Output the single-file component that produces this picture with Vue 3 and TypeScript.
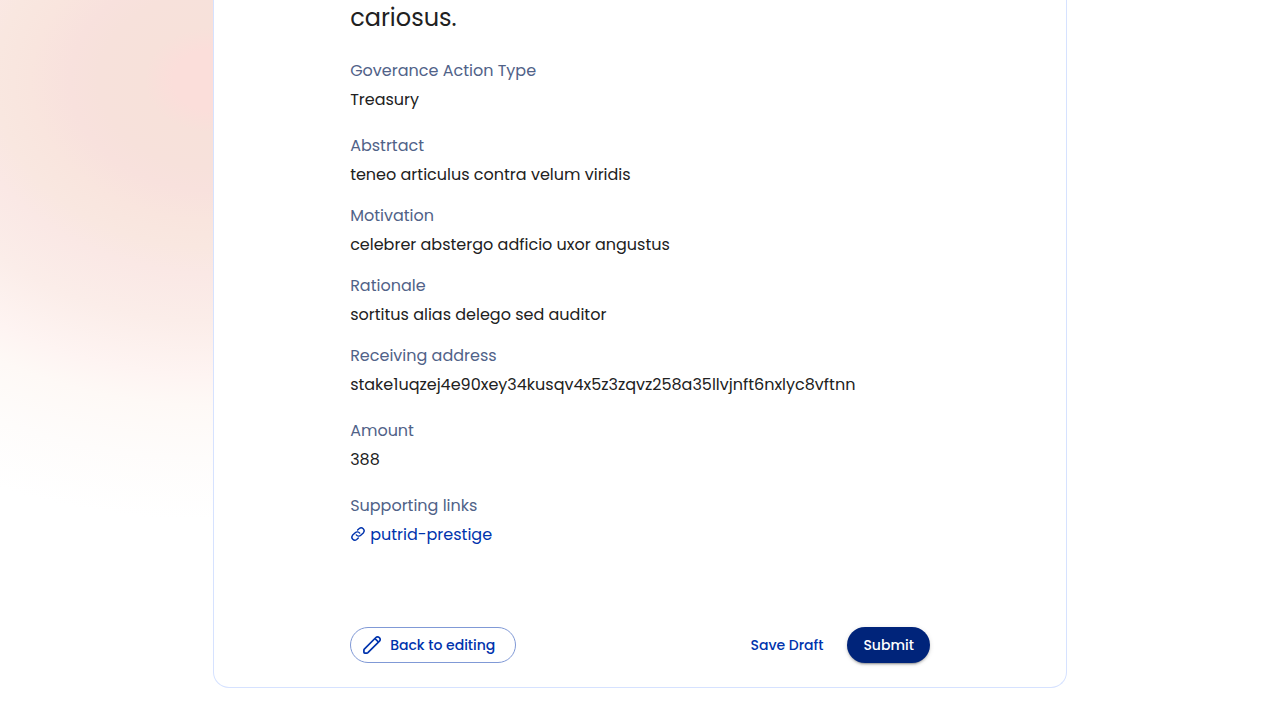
<script setup lang="ts">
interface Field {
  label: string
  value: string
  spaced?: boolean
}

const fields: Field[] = [
  { label: 'Goverance Action Type', value: 'Treasury', spaced: true },
  { label: 'Abstrtact', value: 'teneo articulus contra velum viridis' },
  { label: 'Motivation', value: 'celebrer abstergo adficio uxor angustus' },
  { label: 'Rationale', value: 'sortitus alias delego sed auditor' },
  {
    label: 'Receiving address',
    value: 'stake1uqzej4e90xey34kusqv4x5z3zqvz258a35llvjnft6nxlyc8vftnn',
    spaced: true,
  },
  { label: 'Amount', value: '388', spaced: true },
]
</script>

<template>
  <main class="page">
    <section class="card">
      <h1 class="title">cariosus.</h1>
      <dl class="fields">
        <div v-for="f in fields" :key="f.label" class="field" :class="{ spaced: f.spaced }">
          <dt>{{ f.label }}</dt>
          <dd>{{ f.value }}</dd>
        </div>
        <div class="field">
          <dt>Supporting links</dt>
          <dd>
            <a class="link" href="#putrid-prestige">
              <svg width="16" height="16" viewBox="0 0 16 16" fill="none" aria-hidden="true">
                <g stroke="currentColor" stroke-width="1.4" stroke-linecap="round">
                  <path d="M6.3 8.900a3 3 0 0 0 4.500.4l2.700-2.600a3 3 0 0 0-4.200-4.200L7.600 4.100" />
                  <path d="M9.700 7.100a3 3 0 0 0-4.500-.4L2.500 9.300a3 3 0 0 0 4.200 4.200L8.300 11.900" />
                </g>
              </svg>
              <span>putrid-prestige</span>
            </a>
          </dd>
        </div>
      </dl>
      <div class="actions">
        <button type="button" class="btn outlined">
          <svg width="20" height="20" viewBox="0 0 20 20" fill="none" aria-hidden="true">
            <g stroke="currentColor" stroke-width="1.7" stroke-linejoin="round">
              <path d="M1.900 17.300v-2.200a1.500 1.500 0 0 1 .4-1L13.900 2.500a2.300 2.300 0 0 1 3.300 0l.3.3a2.300 2.300 0 0 1 0 3.300L5.900 17.700a1.500 1.500 0 0 1-1 .4H2.700a.8.8 0 0 1-.8-.8z" />
              <path d="M13 3.600l3.400 3.400" />
            </g>
          </svg>
          <span>Back to editing</span>
        </button>
        <div class="right">
          <button type="button" class="btn text">Save Draft</button>
          <button type="button" class="btn contained">Submit</button>
        </div>
      </div>
    </section>
  </main>
</template>

<style>
body {
  background: #fff;
}
</style>

<style scoped>
.page {
  box-sizing: border-box;
  min-height: 100vh;
  padding-bottom: 32px;
  font-family: Poppins, Inter, sans-serif;
  font-size: 16px;
  line-height: 24px;
  background: radial-gradient(
    ellipse 570px 440px at 213px 80px,
    #fbdedA 0%,
    #fbdeda 7%,
    #f7e1da 12%,
    #f7e1db 20%,
    #f8e1dd 25%,
    #f9e5de 32%,
    #f9e7e0 38%,
    #fae8e5 44%,
    #fbede9 55%,
    #fef4f2 67%,
    #fef9f6 74%,
    #fefcfb 86%,
    #ffffff 100%
  );
}

.card {
  box-sizing: border-box;
  width: 66.7%;
  margin: 0 auto;
  padding: 0 136px 24px;
  border: 1px solid #d6e2ff;
  border-top: 0;
  border-radius: 0 0 16px 16px;
  background: #fff;
}

.title {
  margin: 0 0 23px;
  font-size: 24px;
  line-height: 36px;
  font-weight: 400;
  color: #212121;
}

.fields {
  margin: 0;
}

.field {
  margin-bottom: 17px;
}

.field.spaced {
  margin-bottom: 22px;
}

.field:last-child {
  margin-bottom: 0;
}

dt {
  margin-bottom: 5px;
  color: #506288;
}

dd {
  margin: 0;
  color: #212121;
}

.link {
  display: flex;
  width: fit-content;
  align-items: center;
  gap: 4px;
  color: #0033ad;
  text-decoration: none;
}

.link svg {
  margin-bottom: 3px;
}

.actions {
  display: flex;
  justify-content: space-between;
  margin-top: 80px;
}

.right {
  display: flex;
  gap: 8px;
}

.btn {
  box-sizing: border-box;
  display: inline-flex;
  align-items: center;
  justify-content: center;
  height: 36px;
  padding: 0 16px;
  border: 0;
  border-radius: 18px;
  background: transparent;
  color: #0033ad;
  font: inherit;
  font-size: 14px;
  font-weight: 500;
  white-space: nowrap;
  cursor: pointer;
}

.outlined {
  justify-content: flex-start;
  gap: 8px;
  min-width: 166px;
  padding: 0 15px 0 11px;
  border: 1px solid #8099d6;
}

.contained {
  background: #00247a;
  color: #fff;
  box-shadow: 0 3px 1px -2px rgba(0, 0, 0, 0.2), 0 2px 2px rgba(0, 0, 0, 0.14),
    0 1px 5px rgba(0, 0, 0, 0.12);
}
</style>
